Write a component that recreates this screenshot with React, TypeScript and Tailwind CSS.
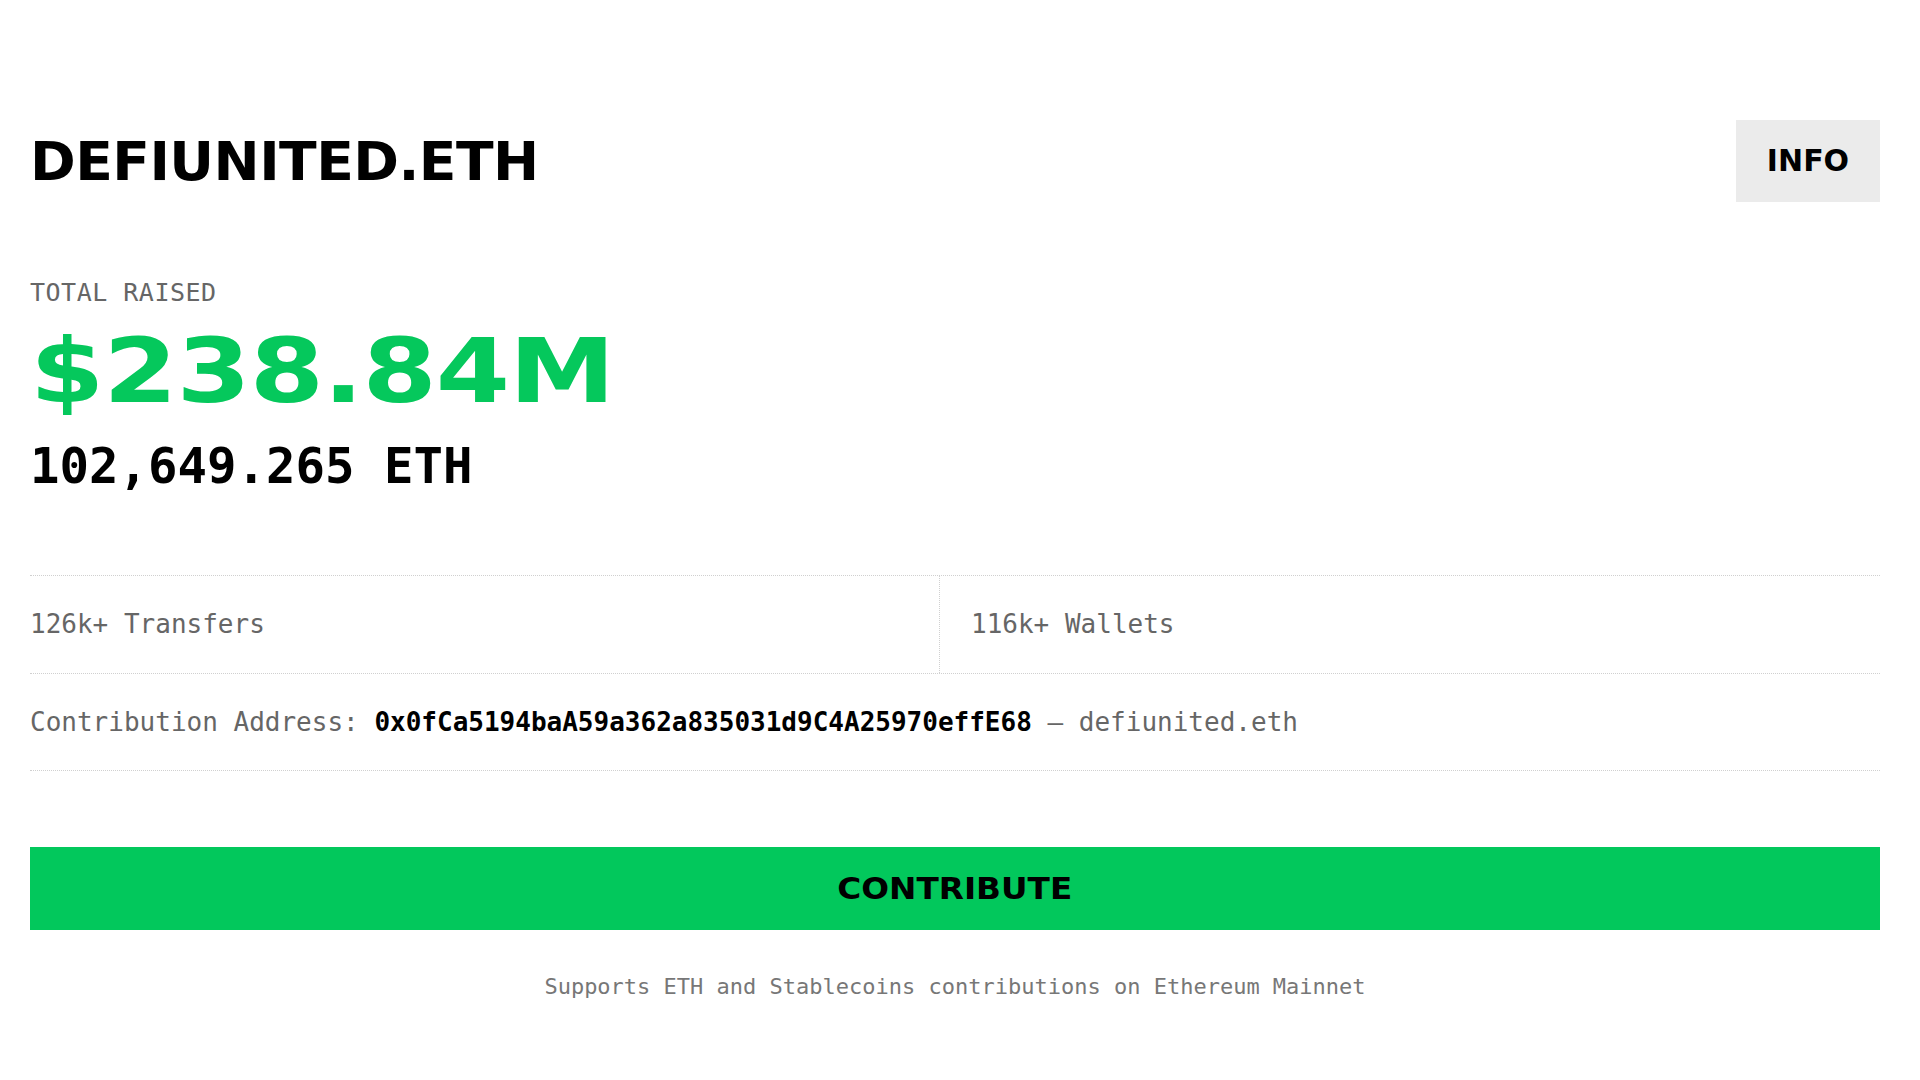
import { useState } from "react";

const display = "font-['DejaVu_Sans',sans-serif] font-bold";
const mono = "font-['DejaVu_Sans_Mono','Liberation_Mono',monospace]";

export default function App() {
  const [showInfo, setShowInfo] = useState(false);

  return (
    <div className="min-h-screen overflow-hidden bg-white pl-[30px] pr-[40px] pt-[120px] text-black">
      <header className="flex items-center justify-between">
        <h1 className={`${display} origin-left scale-x-104 text-[53px] leading-none tracking-[-0.01em]`}>
          DEFIUNITED.ETH
        </h1>
        <button
          onClick={() => setShowInfo(!showInfo)}
          className={`${display} h-[82px] w-[144px] bg-[#ebebeb] text-[30px] leading-none`}
        >
          INFO
        </button>
      </header>

      <section className="mt-[78px]">
        <div className={`${mono} text-[25px] leading-none tracking-[0.02em] text-[#666]`}>TOTAL RAISED</div>
        <div
          className={`${display} mt-[22px] w-fit origin-left scale-x-120 text-[89px] leading-none tracking-[-0.01em] text-[#05c85c]`}
        >
          $238.84M
        </div>
        <div className={`${mono} mt-[26px] text-[49px] font-bold leading-none`}>102,649.265 ETH</div>
      </section>

      <div className="mt-[84px] border-t border-dotted border-[#d0d0d0]">
        <div className="grid grid-cols-[909px_1fr] border-b border-dotted border-[#d0d0d0]">
          <div className={`${mono} flex h-[97px] items-center text-[26px] text-[#666]`}>126k+ Transfers</div>
          <div
            className={`${mono} flex h-[97px] items-center border-l border-dotted border-[#d0d0d0] pl-[31px] text-[26px] text-[#666]`}
          >
            116k+ Wallets
          </div>
        </div>
        <div
          className={`${mono} flex h-[97px] items-center border-b border-dotted border-[#d0d0d0] text-[26px] text-[#666]`}
        >
          <span>Contribution Address:&nbsp;</span>
          <span className="font-bold text-black">0x0fCa5194baA59a362a835031d9C4A25970effE68</span>
          <span>&nbsp;— defiunited.eth</span>
        </div>
      </div>

      <button className="mt-[76px] flex h-[83px] w-full items-center justify-center bg-[#02c85c]">
        <span className={`${display} inline-block scale-x-109 text-[30px] leading-none`}>CONTRIBUTE</span>
      </button>

      <p className={`${mono} mt-[40px] text-center text-[22px] text-[#777]`}>
        Supports ETH and Stablecoins contributions on Ethereum Mainnet
      </p>
    </div>
  );
}
